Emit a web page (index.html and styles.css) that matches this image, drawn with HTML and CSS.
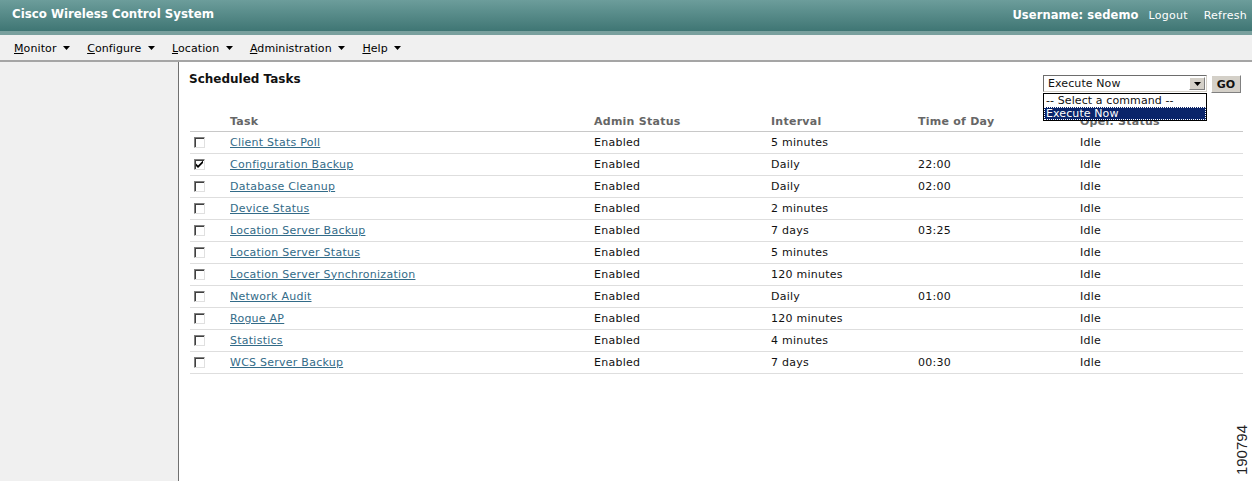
FILE: index.html
```html
<!DOCTYPE html>
<html lang="en">
<head>
    <meta charset="UTF-8">
    <title>Scheduled Tasks - Cisco Wireless Control System</title>
    <link rel="stylesheet" href="styles.css">
</head>
<body>

<div class="topbar">
    <div class="app-title">Cisco Wireless Control System</div>
    <div class="user-links">
        <span class="username">Username: sedemo</span>
        <a href="#">Logout</a>
        <a href="#">Refresh</a>
    </div>
</div>

<div class="menubar">
    <span class="menu-item"><u>M</u>onitor <svg width="7" height="4" viewBox="0 0 7 4"><path d="M0 0h7L3.5 4z"/></svg></span>
    <span class="menu-item"><u>C</u>onfigure <svg width="7" height="4" viewBox="0 0 7 4"><path d="M0 0h7L3.5 4z"/></svg></span>
    <span class="menu-item"><u>L</u>ocation <svg width="7" height="4" viewBox="0 0 7 4"><path d="M0 0h7L3.5 4z"/></svg></span>
    <span class="menu-item"><u>A</u>dministration <svg width="7" height="4" viewBox="0 0 7 4"><path d="M0 0h7L3.5 4z"/></svg></span>
    <span class="menu-item"><u>H</u>elp <svg width="7" height="4" viewBox="0 0 7 4"><path d="M0 0h7L3.5 4z"/></svg></span>
</div>

<div class="layout">
    <div class="sidebar"></div>

    <div class="content">
        <div class="toolbar">
            <h1>Scheduled Tasks</h1>
            <div class="command">
                <div class="select">
                    <span>Execute Now</span>
                    <span class="select-btn"><svg width="7" height="4" viewBox="0 0 7 4"><path d="M0 0h7L3.5 4z"/></svg></span>
                    <!-- open dropdown list, lies over the table header -->
                    <div class="select-list">
                        <div class="option">-- Select a command --</div>
                        <div class="option selected">Execute Now</div>
                    </div>
                </div>
                <button class="go">GO</button>
            </div>
        </div>

        <table class="tasks">
            <thead>
                <tr>
                    <th class="col-check"></th>
                    <th class="col-task">Task</th>
                    <th class="col-admin">Admin Status</th>
                    <th class="col-interval">Interval</th>
                    <th class="col-time">Time of Day</th>
                    <th>Oper. Status</th>
                </tr>
            </thead>
            <tbody>
                <tr><td><span class="checkbox"></span></td><td><a href="#">Client Stats Poll</a></td><td>Enabled</td><td>5 minutes</td><td></td><td>Idle</td></tr>
                <tr><td><span class="checkbox checked"><svg width="9" height="9" viewBox="0 0 9 9"><path d="M1 3.5l2 2 5-5v2.5L3 8 1 6z"/></svg></span></td><td><a href="#">Configuration Backup</a></td><td>Enabled</td><td>Daily</td><td>22:00</td><td>Idle</td></tr>
                <tr><td><span class="checkbox"></span></td><td><a href="#">Database Cleanup</a></td><td>Enabled</td><td>Daily</td><td>02:00</td><td>Idle</td></tr>
                <tr><td><span class="checkbox"></span></td><td><a href="#">Device Status</a></td><td>Enabled</td><td>2 minutes</td><td></td><td>Idle</td></tr>
                <tr><td><span class="checkbox"></span></td><td><a href="#">Location Server Backup</a></td><td>Enabled</td><td>7 days</td><td>03:25</td><td>Idle</td></tr>
                <tr><td><span class="checkbox"></span></td><td><a href="#">Location Server Status</a></td><td>Enabled</td><td>5 minutes</td><td></td><td>Idle</td></tr>
                <tr><td><span class="checkbox"></span></td><td><a href="#">Location Server Synchronization</a></td><td>Enabled</td><td>120 minutes</td><td></td><td>Idle</td></tr>
                <tr><td><span class="checkbox"></span></td><td><a href="#">Network Audit</a></td><td>Enabled</td><td>Daily</td><td>01:00</td><td>Idle</td></tr>
                <tr><td><span class="checkbox"></span></td><td><a href="#">Rogue AP</a></td><td>Enabled</td><td>120 minutes</td><td></td><td>Idle</td></tr>
                <tr><td><span class="checkbox"></span></td><td><a href="#">Statistics</a></td><td>Enabled</td><td>4 minutes</td><td></td><td>Idle</td></tr>
                <tr><td><span class="checkbox"></span></td><td><a href="#">WCS Server Backup</a></td><td>Enabled</td><td>7 days</td><td>00:30</td><td>Idle</td></tr>
            </tbody>
        </table>

        <div class="figure-id">190794</div>
    </div>
</div>

</body>
</html>
```

FILE: styles.css
```css
* {
    box-sizing: border-box;
    margin: 0;
    padding: 0;
}

html, body {
    height: 100%;
    overflow: hidden;
}

body {
    display: flex;
    flex-direction: column;
    font-family: "DejaVu Sans", Verdana, sans-serif;
    font-size: 11px;
    letter-spacing: 0.25px;
    color: #111;
    background: #fff;
}

/* Top title bar */
.topbar {
    height: 35px;
    display: flex;
    justify-content: space-between;
    align-items: flex-start;
    padding: 7px 5px 0 12px;
    background: linear-gradient(#6c9d9b, #3f7674 31px, #79a09e 31px, #79a09e 35px);
    color: #fff;
}

.app-title {
    font-size: 11.8px;
    font-weight: bold;
    letter-spacing: 0;
}

.user-links {
    display: flex;
    align-items: baseline;
    gap: 10px;
    padding-top: 1px;
}

.user-links a {
    color: #fff;
    text-decoration: none;
}

.user-links a + a {
    margin-left: 6px;
}

.username {
    font-size: 11.5px;
    font-weight: bold;
    letter-spacing: 0.1px;
}

/* Menu bar */
.menubar {
    height: 27px;
    display: flex;
    align-items: center;
    padding: 2px 0 0 14px;
    gap: 17px;
    background: #f0f0f0;
    border-bottom: 2px solid #a5a5a5;
    color: #000;
    letter-spacing: 0.1px;
}

.menu-item svg {
    margin-left: 3px;
    vertical-align: 2px;
}

/* Page body */
.layout {
    flex: 1;
    display: flex;
    min-height: 0;
}

.sidebar {
    width: 179px;
    background: #f0f0f0;
    border-right: 1px solid #707070;
}

.content {
    flex: 1;
    position: relative;
    padding: 10px 9px 0 10px;
}

.toolbar {
    display: flex;
    justify-content: space-between;
    align-items: flex-start;
    height: 39px;
}

.toolbar h1 {
    font-size: 12px;
    font-weight: bold;
    letter-spacing: 0;
}

.command {
    display: flex;
    gap: 4px;
    margin-top: 3px;
    margin-right: 2px;
}

.select {
    position: relative;
    width: 164px;
    height: 17px;
    border: 1px solid #6d6d6d;
    border-right-color: #d4d0c8;
    border-bottom-color: #d4d0c8;
    background: #fff;
    padding: 1px 0 0 4px;
    display: flex;
    justify-content: space-between;
    letter-spacing: 0.1px;
}

.select-btn {
    width: 16px;
    height: 13px;
    margin: 0 1px 0 0;
    background: #d4d0c8;
    border: 1px solid;
    border-color: #fff #808080 #808080 #fff;
    display: flex;
    align-items: center;
    justify-content: center;
}

.select-list {
    position: absolute;
    top: 17px;
    left: -1px;
    width: 164px;
    border: 1px solid #000;
    background: #fff;
    z-index: 2;
}

.option {
    height: 13px;
    line-height: 13px;
    padding-left: 2px;
    font-size: 11px;
}

.option.selected {
    background: #0a246a;
    color: #fff;
    outline: 1px dotted #fff;
    outline-offset: -1px;
}

.go {
    width: 30px;
    height: 18px;
    font-family: "DejaVu Sans", Verdana, sans-serif;
    font-size: 11px;
    font-weight: bold;
    color: #111;
    background: #d4d0c8;
    border: 1px solid;
    border-color: #fff #808080 #808080 #fff;
}

/* Task table */
.tasks {
    width: 1053px;
    border-collapse: collapse;
    margin-left: 1px;
}

.tasks th {
    height: 20px;
    text-align: left;
    vertical-align: bottom;
    padding-bottom: 3px;
    font-weight: bold;
    color: #666;
    border-bottom: 1px solid #c8c8c8;
}

.tasks td {
    height: 22px;
    border-bottom: 1px solid #dedede;
    vertical-align: middle;
}

.col-check { width: 40px; }
.col-task { width: 364px; }
.col-admin { width: 177px; }
.col-interval { width: 147px; }
.col-time { width: 162px; }

.tasks a {
    color: #336b88;
}

.checkbox {
    display: block;
    width: 11px;
    height: 11px;
    margin-left: 4px;
    background: #fff;
    border: 1px solid;
    border-color: #808080 #e0e0e0 #e0e0e0 #808080;
    box-shadow: inset 1px 1px 0 #404040;
}

.checkbox svg {
    display: block;
}

.figure-id {
    position: absolute;
    right: 2px;
    bottom: 6px;
    writing-mode: vertical-rl;
    transform: rotate(180deg);
    font-family: "Liberation Sans", Arial, sans-serif;
    font-size: 15px;
    letter-spacing: 0;
    color: #222;
}
```
